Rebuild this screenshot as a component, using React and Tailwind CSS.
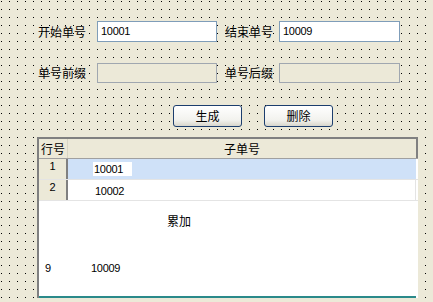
export default function App() {
  return (
    <div className="w-[433px] h-[302px] overflow-hidden bg-black bg-[linear-gradient(90deg,transparent_1px,#ECE9D8_1px),linear-gradient(transparent_1px,#ECE9D8_1px)] bg-[length:8px_8px] bg-[position:1px_1px] text-[12px] text-black flex flex-col">
      {/* row 1 */}
      <div className="flex items-center h-[21px] mt-[21px]">
        <span className="ml-[38px] w-[59px] font-['Noto_Sans_CJK_SC',sans-serif] leading-none">开始单号</span>
        <div className="w-[120px] h-[21px] bg-white border border-[#7F9DB9] flex items-center pl-[3px] font-['Liberation_Sans',sans-serif] text-[11px] tracking-[-0.3px]">10001</div>
        <span className="ml-[8px] w-[54px] font-['Noto_Sans_CJK_SC',sans-serif] leading-none">结束单号</span>
        <div className="w-[121px] h-[21px] bg-white border border-[#7F9DB9] flex items-center pl-[3px] font-['Liberation_Sans',sans-serif] text-[11px] tracking-[-0.3px]">10009</div>
      </div>
      {/* row 2 */}
      <div className="flex items-center h-[20px] mt-[21px]">
        <span className="ml-[38px] w-[59px] font-['Noto_Sans_CJK_SC',sans-serif] leading-none">单号前缀</span>
        <div className="w-[120px] h-[20px] bg-[#ECE9D8] border border-[#A0A7B0]" />
        <span className="ml-[8px] w-[54px] font-['Noto_Sans_CJK_SC',sans-serif] leading-none">单号后缀</span>
        <div className="w-[121px] h-[20px] bg-[#ECE9D8] border border-[#A0A7B0]" />
      </div>
      {/* buttons */}
      <div className="flex mt-[22px] ml-[173px] gap-[22px]">
        <button className="w-[69px] h-[22px] rounded-[3px] border border-[#1C3E6E] bg-[linear-gradient(#FFFFFF,#F2F2EE_70%,#D8D6CC)] font-['Noto_Sans_CJK_SC',sans-serif] text-[12px] leading-none">生成</button>
        <button className="w-[69px] h-[22px] rounded-[3px] border border-[#1C3E6E] bg-[linear-gradient(#FFFFFF,#F2F2EE_70%,#D8D6CC)] font-['Noto_Sans_CJK_SC',sans-serif] text-[12px] leading-none">删除</button>
      </div>
      {/* grid */}
      <div className="mt-[10px] ml-[37px] w-[381px] h-[161px] border-l-2 border-t-2 border-l-[#808080] border-t-[#808080] flex flex-col bg-white">
        <div className="flex h-[20px] bg-[#ECE9D8] border-b border-b-[#A0A0A0]">
          <div className="w-[29px] flex items-center pl-[2px] border-r border-r-[#D8D5C5] font-['Noto_Sans_CJK_SC',sans-serif] leading-none">行号</div>
          <div className="flex-1 flex items-center justify-center border-r-2 border-r-[#808080] font-['Noto_Sans_CJK_SC',sans-serif] leading-none">子单号</div>
        </div>
        <div className="flex h-[21px] border-b border-b-[#E4E4E4]">
          <div className="w-[29px] bg-[#ECE9D8] border-r-2 border-r-[#808080] flex justify-center pt-[2px] font-['Liberation_Sans',sans-serif] text-[11px] leading-none">1</div>
          <div className="flex-1 bg-[#CFE1F8] mr-[2px] flex items-center pl-[25px]">
            <span className="bg-white pl-[1px] pr-[9px] font-['Liberation_Sans',sans-serif] text-[11px] tracking-[-0.3px] leading-[14px]">10001</span>
          </div>
        </div>
        <div className="flex h-[21px] border-b border-b-[#E4E4E4]">
          <div className="w-[29px] bg-[#ECE9D8] border-r-2 border-r-[#808080] flex justify-center pt-[2px] font-['Liberation_Sans',sans-serif] text-[11px] leading-none">2</div>
          <div className="flex-1 bg-white mr-[2px] border-r border-r-[#E4E4E4] flex items-center pl-[27px] pt-[3px] font-['Liberation_Sans',sans-serif] text-[11px] tracking-[-0.3px]">10002</div>
        </div>
        <div className="flex-1 flex flex-col border-b-2 border-b-[#2B8A8A] mr-[2px]">
          <div className="mt-[14px] ml-[128px] font-['Noto_Sans_CJK_SC',sans-serif] leading-none">累加</div>
          <div className="mt-[36px] flex font-['Liberation_Sans',sans-serif] text-[11px] tracking-[-0.3px] leading-none">
            <span className="ml-[6px] w-[46px]">9</span>
            <span>10009</span>
          </div>
        </div>
      </div>
    </div>
  );
}
